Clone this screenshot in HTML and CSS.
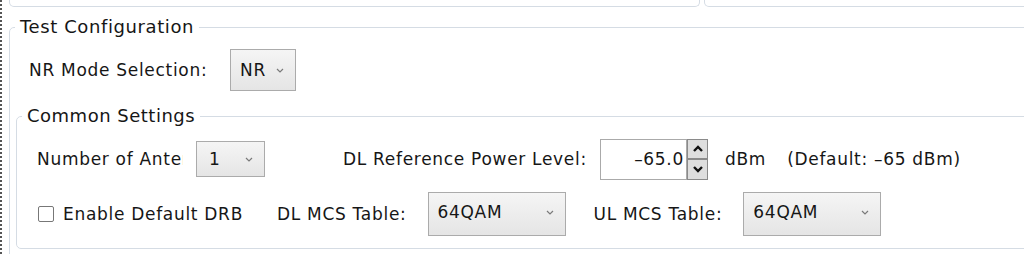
FILE: index.html
```html
<!DOCTYPE html>
<html lang="en">
<head>
    <meta charset="UTF-8">
    <title>Test Configuration</title>
    <link rel="stylesheet" href="styles.css">
</head>
<body>
    <div class="screen">
        <div class="top-panels">
            <div class="panel-stub left"></div>
            <div class="panel-stub right"></div>
        </div>

        <fieldset class="group test-config">
            <legend>Test Configuration</legend>

            <div class="row mode-row">
                <span class="lbl mode-lbl">NR Mode Selection:</span>
                <div class="combo combo-nr">
                    <span>NR</span>
                    <svg class="chev" width="8" height="5" viewBox="0 0 8 5"><polyline points="1,1 4,4 7,1" fill="none" stroke="#7a7a7a" stroke-width="1.2"/></svg>
                </div>
            </div>

            <fieldset class="group common">
                <legend>Common Settings</legend>

                <div class="row row-one">
                    <span class="lbl ant-lbl">Number of Antennas:</span>
                    <div class="combo combo-ant">
                        <span>1</span>
                        <svg class="chev" width="8" height="5" viewBox="0 0 8 5"><polyline points="1,1 4,4 7,1" fill="none" stroke="#7a7a7a" stroke-width="1.2"/></svg>
                    </div>
                    <span class="lbl power-lbl">DL Reference Power Level:</span>
                    <div class="spinner">
                        <div class="spin-field">–65.0</div>
                        <div class="spin-btns">
                            <div class="spin-btn">
                                <svg width="12" height="8" viewBox="0 0 12 8"><polyline points="2,6 6,2 10,6" fill="none" stroke="#111" stroke-width="2.4"/></svg>
                            </div>
                            <div class="spin-btn">
                                <svg width="12" height="8" viewBox="0 0 12 8"><polyline points="2,2 6,6 10,2" fill="none" stroke="#111" stroke-width="2.4"/></svg>
                            </div>
                        </div>
                    </div>
                    <span class="lbl unit-lbl">dBm</span>
                    <span class="lbl">(Default: –65 dBm)</span>
                </div>

                <div class="row row-two">
                    <span class="check"></span>
                    <span class="lbl drb-lbl">Enable Default DRB</span>
                    <span class="lbl dl-lbl">DL MCS Table:</span>
                    <div class="combo combo-mcs">
                        <span>64QAM</span>
                        <svg class="chev" width="8" height="5" viewBox="0 0 8 5"><polyline points="1,1 4,4 7,1" fill="none" stroke="#7a7a7a" stroke-width="1.2"/></svg>
                    </div>
                    <span class="lbl ul-lbl">UL MCS Table:</span>
                    <div class="combo combo-mcs">
                        <span>64QAM</span>
                        <svg class="chev" width="8" height="5" viewBox="0 0 8 5"><polyline points="1,1 4,4 7,1" fill="none" stroke="#7a7a7a" stroke-width="1.2"/></svg>
                    </div>
                </div>
            </fieldset>
        </fieldset>
    </div>
</body>
</html>
```

FILE: styles.css
```css
html, body {
    margin: 0;
    height: 100%;
    overflow: hidden;
    background: #fff;
}
body {
    font-family: "DejaVu Sans", "Liberation Sans", sans-serif;
    font-size: 17px;
    letter-spacing: 0.7px;
    color: #161616;
}
.screen {
    height: 100%;
    border-left: 2px dotted #555;
    padding-left: 7px;
}
.top-panels {
    display: flex;
    gap: 4px;
    height: 7px;
}
.panel-stub {
    border: 1px solid #d5dce4;
    border-top: none;
    border-radius: 0 0 5px 5px;
}
.panel-stub.left {
    width: 689px;
}
.panel-stub.right {
    flex: 1;
    margin-right: -20px;
}
.group {
    margin: 0;
    padding: 0;
    border: 1px solid #d5dce4;
    border-radius: 5px;
    min-width: 0;
}
.group > legend {
    padding: 0 5px;
    margin-left: 5px;
    line-height: 20px;
    font-size: 18px;
    letter-spacing: 0.6px;
}
.test-config {
    margin-top: 10px;
    margin-right: -40px;
    padding-bottom: 30px;
}
.row {
    display: flex;
    align-items: center;
    white-space: nowrap;
}
.mode-row {
    margin: 12px 0 0 19px;
}
.mode-lbl {
    width: 201px;
}
.combo {
    display: flex;
    align-items: center;
    justify-content: space-between;
    box-sizing: border-box;
    padding: 0 11px 0 9px;
    border: 1px solid #ababab;
    background: linear-gradient(#f5f5f5, #e5e5e5);
}
.combo-nr {
    width: 66px;
    height: 42px;
}
.combo-ant {
    width: 69px;
    height: 36px;
    padding-left: 12px;
}
.combo-mcs {
    width: 138px;
    height: 44px;
    padding-bottom: 4px;
}
.common {
    margin: 15px 0 0 6px;
    padding: 0 0 12px 20px;
}
.common > legend {
    margin-left: -15px;
    letter-spacing: 0.5px;
}
.row-one {
    margin-top: 12px;
    height: 42px;
}
.ant-lbl {
    width: 146px;
    overflow: hidden;
    margin-right: 13px;
}
.power-lbl {
    margin-left: 78px;
    width: 257px;
}
.spinner {
    display: flex;
    height: 41px;
}
.spin-field {
    width: 87px;
    box-sizing: border-box;
    border: 1px solid #aaa;
    text-align: right;
    padding: 0 2px 0 0;
    line-height: 39px;
}
.spin-btns {
    display: flex;
    flex-direction: column;
}
.spin-btn {
    width: 21px;
    height: 20px;
    box-sizing: border-box;
    border: 1px solid #8a8a8a;
    background: #dedede;
    display: flex;
    align-items: center;
    justify-content: center;
}
.spin-btn + .spin-btn {
    height: 21px;
}
.unit-lbl {
    margin: 0 21px 0 17px;
}
.row-two {
    margin-top: 12px;
    height: 44px;
}
.check {
    width: 16px;
    height: 16px;
    box-sizing: border-box;
    border: 1px solid #777;
    border-radius: 2px;
    background: #fff;
    margin: 0 9px 0 1px;
}
.drb-lbl {
    margin-right: 34px;
}
.dl-lbl,
.ul-lbl {
    margin-right: 21px;
}
.ul-lbl {
    margin-left: 28px;
}
```
